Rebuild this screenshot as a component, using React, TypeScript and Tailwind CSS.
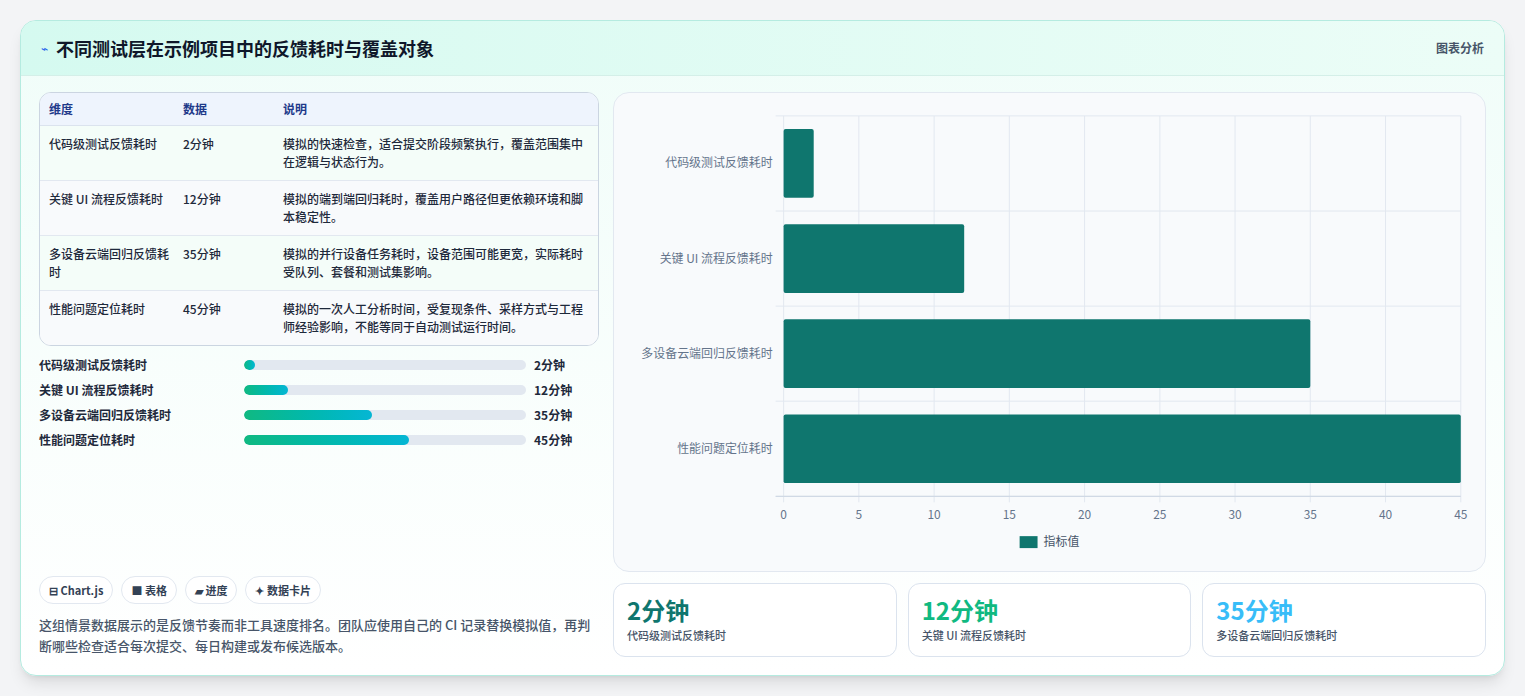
const rows = [
  { name: "代码级测试反馈耗时", value: 2, text: "2分钟", desc: "模拟的快速检查，适合提交阶段频繁执行，覆盖范围集中在逻辑与状态行为。" },
  { name: "关键 UI 流程反馈耗时", value: 12, text: "12分钟", desc: "模拟的端到端回归耗时，覆盖用户路径但更依赖环境和脚本稳定性。" },
  { name: "多设备云端回归反馈耗时", value: 35, text: "35分钟", desc: "模拟的并行设备任务耗时，设备范围可能更宽，实际耗时受队列、套餐和测试集影响。" },
  { name: "性能问题定位耗时", value: 45, text: "45分钟", desc: "模拟的一次人工分析时间，受复现条件、采样方式与工程师经验影响，不能等同于自动测试运行时间。" },
];

function Chart() {
  const x0 = 170, x1 = 850, y0 = 23, y1 = 405;
  const sx = (v: number) => x0 + ((x1 - x0) * v) / 45;
  const band = (y1 - y0) / 4;
  return (
    <svg viewBox="0 0 874 480" className="w-full h-full" style={{ fontFamily: '"Noto Sans CJK SC", sans-serif' }}>
      {[0, 5, 10, 15, 20, 25, 30, 35, 40, 45].map((t) => (
        <g key={t}>
          <line x1={sx(t)} x2={sx(t)} y1={y0} y2={y1 + 6} stroke="#e2e8f0" />
          <text x={sx(t)} y={428} textAnchor="middle" fontSize="12" fill="#64748b">{t}</text>
        </g>
      ))}
      {[0, 1, 2, 3, 4].map((i) => (
        <line key={i} x1={x0 - 8} x2={x1} y1={y0 + band * i} y2={y0 + band * i} stroke="#e2e8f0" />
      ))}
      <line x1={x0 - 8} x2={x1} y1={y1} y2={y1} stroke="#cbd5e1" />
      {rows.map((r, i) => {
        const cy = y0 + band * i + band / 2;
        return (
          <g key={r.name}>
            <rect x={x0} y={cy - 34.5} width={sx(r.value) - x0} height={69} fill="#0f766e" rx="2" />
            <text x={x0 - 11} y={cy + 4} textAnchor="end" fontSize="12" fill="#64748b">{r.name}</text>
          </g>
        );
      })}
      <rect x={407} y={445} width={18} height={12} fill="#0f766e" />
      <text x={431} y={455} fontSize="12" fill="#475569">指标值</text>
    </svg>
  );
}

export default function App() {
  const stats = [
    { v: "2分钟", c: "text-[#0f766e]", l: rows[0].name },
    { v: "12分钟", c: "text-[#10b981]", l: rows[1].name },
    { v: "35分钟", c: "text-[#38bdf8]", l: rows[2].name },
  ];
  return (
    <div className="w-[1525px] h-[696px] bg-[#f3f4f6] p-5 pb-5" style={{ fontFamily: '"Noto Sans CJK SC", "Noto Sans", sans-serif' }}>
      <div className="h-[656px] w-[1485px] rounded-2xl border border-[#b5ebe0] bg-gradient-to-b from-[#f0fdf9] to-white shadow-lg overflow-hidden flex flex-col">
        <div className="h-[55px] shrink-0 flex items-center justify-between px-5 bg-gradient-to-r from-[#d5faf0] to-[#ecfdf7] border-b border-[#d4efe8]">
          <div className="flex items-center gap-2">
            <span className="text-[#2563eb] text-xs">⌁</span>
            <h1 className="text-lg font-bold text-[#0f172a]">不同测试层在示例项目中的反馈耗时与覆盖对象</h1>
          </div>
          <span className="text-xs font-semibold text-[#475569]">图表分析</span>
        </div>
        <div className="flex gap-[14px] px-[18px] pt-4 flex-1">
          <div className="w-[560px] flex flex-col">
            <div className="rounded-xl border border-[#cbd5e1] overflow-hidden bg-white text-xs text-[#1e293b]">
              <div className="grid grid-cols-[134px_100px_1fr] bg-[#eef4fd] text-[#1e3a8a] font-semibold h-[33px] items-center px-[9px] border-b border-[#dbe3ee]">
                <span>维度</span><span>数据</span><span>说明</span>
              </div>
              {rows.map((r, i) => (
                <div key={r.name} className={`grid grid-cols-[134px_100px_1fr] px-[9px] py-[9px] leading-[18px] font-medium ${i < 3 ? "border-b border-[#e2e8f0]" : ""} ${i % 2 ? "bg-[#f8fafc]" : "bg-[#f4fdf9]"}`}>
                  <span className="pr-3">{r.name}</span><span>{r.text}</span><span>{r.desc}</span>
                </div>
              ))}
            </div>
            <div className="flex flex-col gap-[9px] mt-[11px]">
              {rows.map((r) => (
                <div key={r.name} className="flex items-center text-xs font-semibold text-[#1e293b] h-4">
                  <span className="w-[205px]">{r.name}</span>
                  <div className="w-[282px] h-[10px] rounded-full bg-[#e2e8f0] overflow-hidden">
                    <div className="h-full rounded-full bg-gradient-to-r from-[#10b981] to-[#06b6d4]" style={{ width: `${Math.max(r.value * 1.3, 4)}%` }} />
                  </div>
                  <span className="ml-[8px]">{r.text}</span>
                </div>
              ))}
            </div>
            <div className="mt-auto pb-[19px]">
              <div className="flex gap-2 text-[11px] font-semibold text-[#334155]">
                {["⊟ Chart.js", "■ 表格", "▰ 进度", "✦ 数据卡片"].map((c) => (
                  <span key={c} className="px-[9px] h-[28px] flex items-center rounded-full border border-[#e2e8f0] bg-white">{c}</span>
                ))}
              </div>
              <p className="mt-[10px] text-[13px] leading-[21px] text-[#475569] font-medium">这组情景数据展示的是反馈节奏而非工具速度排名。团队应使用自己的 CI 记录替换模拟值，再判断哪些检查适合每次提交、每日构建或发布候选版本。</p>
            </div>
          </div>
          <div className="flex-1 flex flex-col gap-[11px]">
            <div className="h-[480px] rounded-2xl border border-[#e2e8f0] bg-[#f8fafc]">
              <Chart />
            </div>
            <div className="grid grid-cols-3 gap-[11px]">
              {stats.map((s) => (
                <div key={s.v} className="h-[74px] rounded-xl border border-[#dbe3ee] bg-white px-[13px] pt-[10px]">
                  <div className={`text-2xl font-bold ${s.c}`}>{s.v}</div>
                  <div className="text-[11px] font-medium text-[#475569] mt-[1px]">{s.l}</div>
                </div>
              ))}
            </div>
          </div>
        </div>
      </div>
    </div>
  );
}
